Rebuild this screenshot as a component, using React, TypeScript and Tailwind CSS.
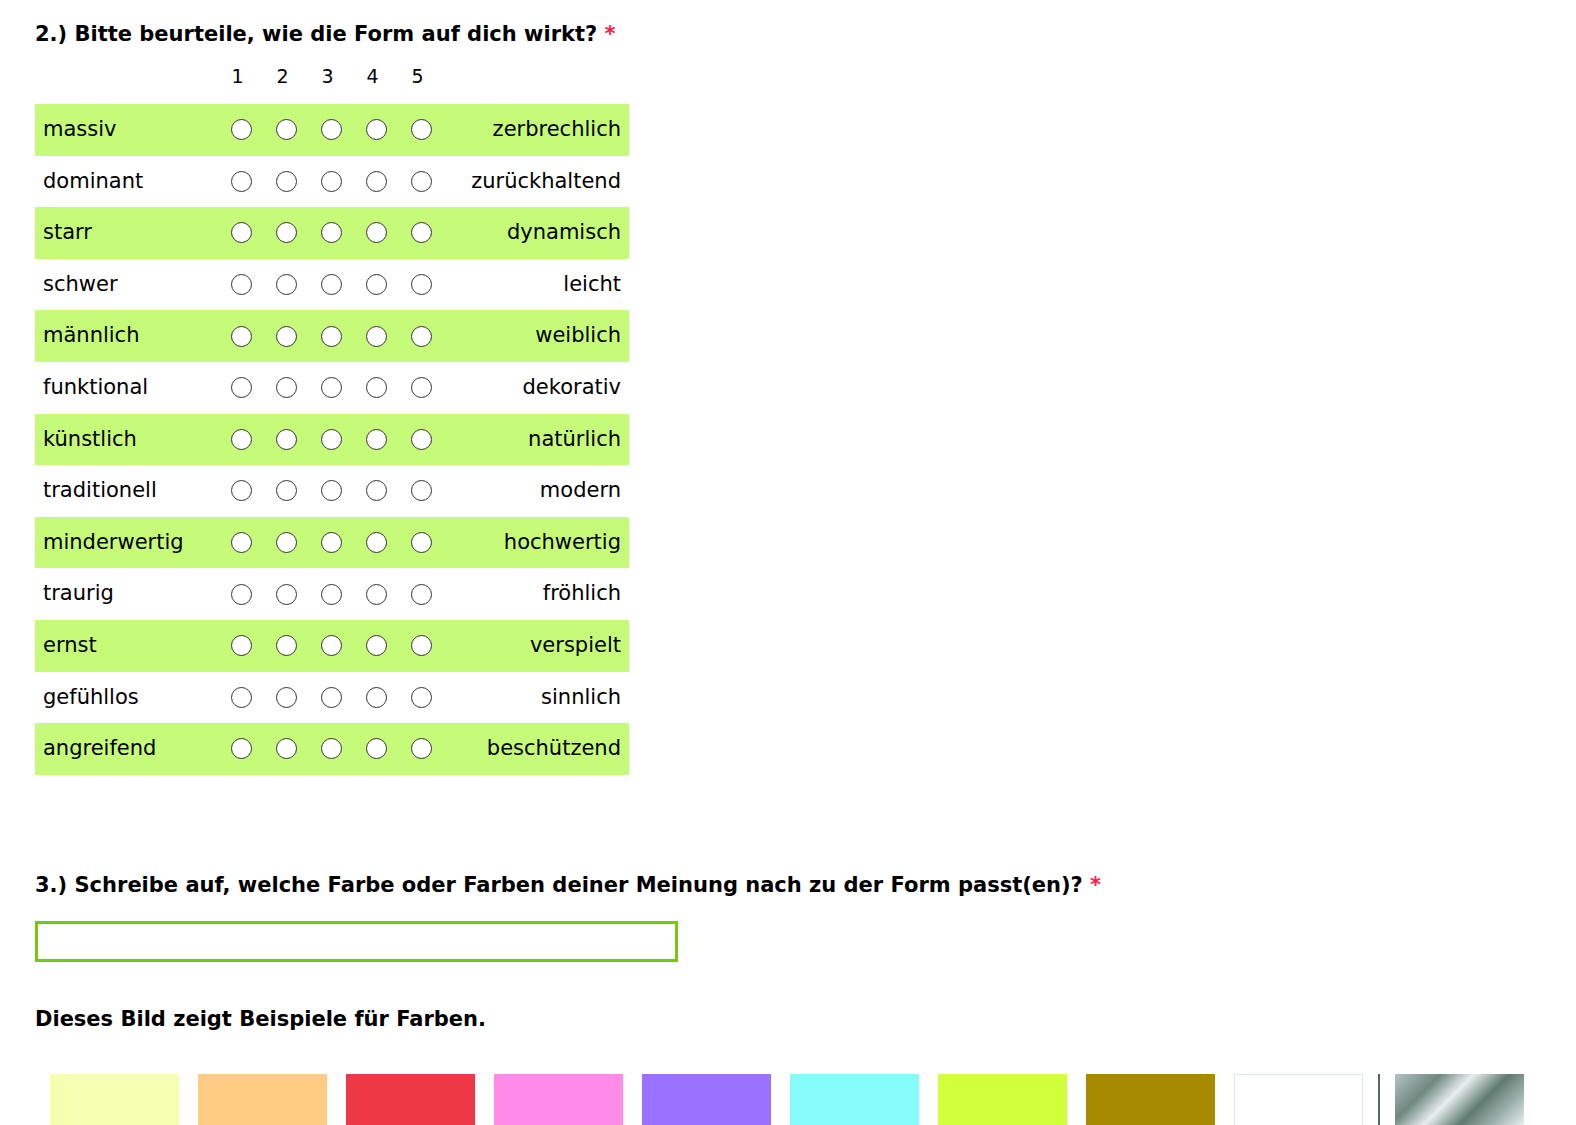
const rows: [string, string][] = [
  ["massiv", "zerbrechlich"],
  ["dominant", "zurückhaltend"],
  ["starr", "dynamisch"],
  ["schwer", "leicht"],
  ["männlich", "weiblich"],
  ["funktional", "dekorativ"],
  ["künstlich", "natürlich"],
  ["traditionell", "modern"],
  ["minderwertig", "hochwertig"],
  ["traurig", "fröhlich"],
  ["ernst", "verspielt"],
  ["gefühllos", "sinnlich"],
  ["angreifend", "beschützend"],
];

const swatches = [
  "bg-[#f4ffb0]",
  "bg-[#ffcc84]",
  "bg-[#ee3846]",
  "bg-[#ff8ae8]",
  "bg-[#9a72ff]",
  "bg-[#86fcfa]",
  "bg-[#d1ff3c]",
  "bg-[#a88a00]",
];

function Radio() {
  return (
    <span className="block w-[21px] h-[21px] rounded-full border-[1.5px] border-[#333] bg-white" />
  );
}

export default function App() {
  return (
    <div className="min-h-[1125px] bg-white text-black font-['DejaVu_Sans',sans-serif] pl-[35px] pt-[20px] overflow-hidden">
      {/* Question 2 */}
      <h2 className="text-[21px] font-bold leading-[28px]">
        2.) Bitte beurteile, wie die Form auf dich wirkt?{" "}
        <span className="text-[#ff1a4a]">*</span>
      </h2>

      <div className="w-[594px] mt-[13px]">
        <div className="flex h-[43px] items-start pt-[1px] text-[19px]">
          <div className="w-[183px]" />
          {[1, 2, 3, 4, 5].map((n) => (
            <div key={n} className="w-[45px] text-center pr-[6px]">
              {n}
            </div>
          ))}
        </div>

        {rows.map(([left, right], i) => (
          <div
            key={left}
            className={`flex items-center h-[51.6px] text-[21px] ${i % 2 === 0 ? "bg-[#c6fb7a]" : "bg-white"}`}
          >
            <div className="w-[183px] pl-[8px]">{left}</div>
            {[1, 2, 3, 4, 5].map((n) => (
              <div key={n} className="w-[45px] flex justify-center pl-[2px]">
                <Radio />
              </div>
            ))}
            <div className="w-[186px] pr-[8px] text-right">{right}</div>
          </div>
        ))}
      </div>

      {/* Question 3 */}
      <h2 className="text-[21px] font-bold leading-[28px] mt-[96px]">
        3.) Schreibe auf, welche Farbe oder Farben deiner Meinung nach zu der Form passt(en)?{" "}
        <span className="text-[#ff1a4a]">*</span>
      </h2>
      <input
        type="text"
        className="block mt-[22px] w-[643px] h-[41px] border-[3px] border-[#77c70f] bg-white outline-none"
      />

      <p className="text-[21px] font-bold leading-[28px] mt-[43px]">
        Dieses Bild zeigt Beispiele für Farben.
      </p>

      <div className="flex items-start mt-[41px] pl-[15px]">
        <div className="flex gap-[19px]">
          {swatches.map((c) => (
            <div key={c} className={`w-[129px] h-[80px] ${c}`} />
          ))}
          <div className="w-[129px] h-[80px] border border-[#d8ebe4] bg-white" />
        </div>
        <div className="w-[2px] h-[80px] bg-[#52656a] ml-[15px]" />
        <div className="w-[129px] h-[80px] ml-[15px] bg-[linear-gradient(135deg,#b4c4c2_0%,#6f8880_22%,#e8eeee_38%,#5f7a70_55%,#a5b8b4_72%,#e3ebeb_85%,#b7c5c5_100%)]" />
      </div>
    </div>
  );
}
